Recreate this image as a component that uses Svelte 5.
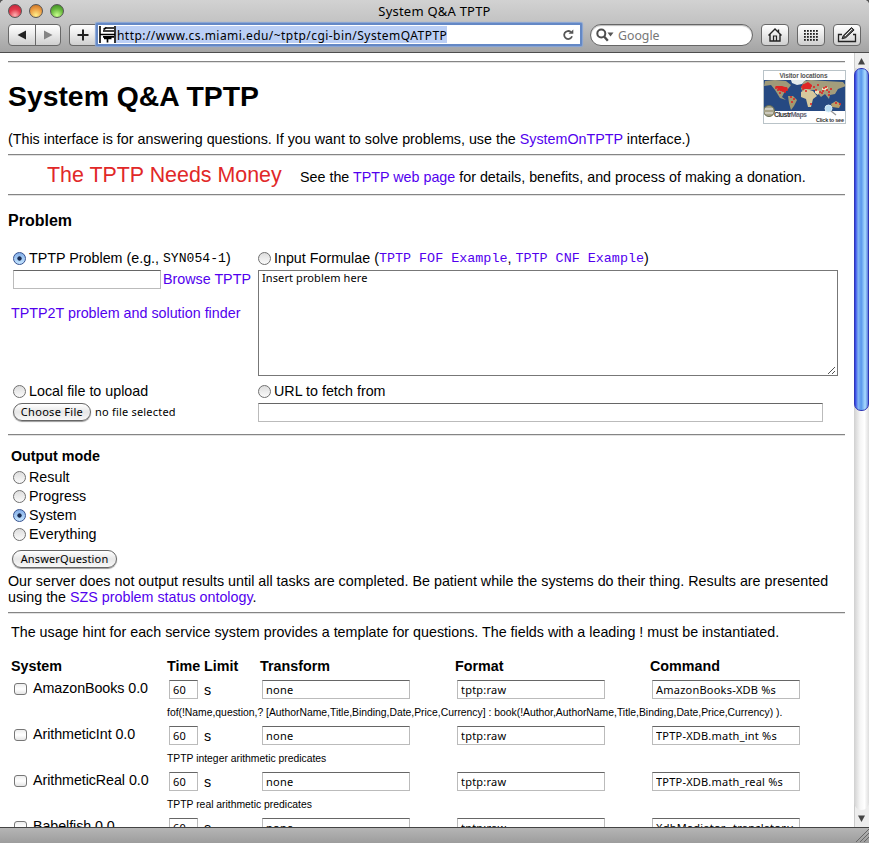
<script>
  const modes = ['Result', 'Progress', 'System', 'Everything'];
  let mode = $state('System');
  let source = $state('tptp');
  const systems = [
    { name: 'AmazonBooks 0.0', command: 'AmazonBooks-XDB %s', hint: 'fof(!Name,question,? [AuthorName,Title,Binding,Date,Price,Currency] : book(!Author,AuthorName,Title,Binding,Date,Price,Currency) ).' },
    { name: 'ArithmeticInt 0.0', command: 'TPTP-XDB.math_int %s', hint: 'TPTP integer arithmetic predicates' },
    { name: 'ArithmeticReal 0.0', command: 'TPTP-XDB.math_real %s', hint: 'TPTP real arithmetic predicates' },
    { name: 'Babelfish 0.0', command: 'XdbMediator--translator.y', hint: '' }
  ];
  const dots = [0, 1, 2, 3, 4].flatMap((x) => [0, 1, 2, 3].map((y) => [x, y]));
  const visitors = [[13,18],[15,20],[18,19],[20,21],[23,18],[24,20],[22,22],[17,23],[39,17],[41,15],[43,16],[45,17],[42,18],[44,14],[47,18],[40,19],[46,15],[48,16],[51,17],[55,15],[57,22],[59,23],[61,18],[64,20],[66,22],[68,19],[63,17],[53,20],[29,32],[31,29],[28,27],[48,34],[66,25],[73,33],[77,34],[43,21],[60,21]];
</script>

<div class="window">
  <header>
    <div class="titlebar">
      <div class="lights"><i class="red"></i><i class="amber"></i><i class="green"></i></div>
      <div class="title">System Q&amp;A TPTP</div>
    </div>
    <div class="toolbar">
      <div class="tool nav">
        <span><svg width="26" height="20"><path d="M17 5.500v9L8.500 10z" fill="#222" /></svg></span>
        <span class="fwd"><svg width="26" height="20"><path d="M8 5.500v9l8.500-4.500z" fill="#858585" /></svg></span>
      </div>
      <div class="tool plus"><svg width="27" height="20"><path d="M7.500 10h11M13 4.500v11" stroke="#222" stroke-width="2" /></svg></div>
      <div class="address">
        <svg class="favicon" width="17" height="17" viewBox="0 0 17 17">
          <path d="M1 0v17" stroke="#000" stroke-width="1.600" />
          <path d="M16 0v17" stroke="#000" stroke-width="1.600" />
          <path d="M1 8.500h15M4 5h11M7.500 2h7.500M7.500 1.500L4.500 3.500M4 10.800h11M5 12.500h7.500M8.500 12v4.500" fill="none" stroke="#000" stroke-width="1.700" />
        </svg>
        <span class="url">http://www.cs.miami.edu/~tptp/cgi-bin/SystemQATPTP</span>
        <svg class="reload" width="14" height="14" viewBox="0 0 14 14"><path d="M9.800 4A4 4 0 1 0 11 8.200" fill="none" stroke="#555" stroke-width="1.800" /><path d="M7.500 5.800h4.800V1.500z" fill="#555" /></svg>
      </div>
      <div class="search">
        <svg width="20" height="16" viewBox="0 0 20 16"><circle cx="5.300" cy="6.500" r="4" fill="none" stroke="#4d4d4d" stroke-width="2" /><path d="M8.300 9.700l3.500 4" stroke="#4d4d4d" stroke-width="2.300" /><path d="M11.500 5.500h6l-3 4z" fill="#555" /></svg>
        <span>Google</span>
      </div>
      <div class="tool icon"><svg width="26" height="20"><path d="M6.500 10.500L13 4 19.500 10.500M8 9.500V16h10V9.500M16.500 7V4.500" fill="none" stroke="#222" stroke-width="1.400" /><path d="M11.500 16v-5h3v5" fill="none" stroke="#222" stroke-width="1.200" /></svg></div>
      <div class="tool icon"><svg width="26" height="20">{#each dots as [x, y]}<rect x={6 + x * 3} y={5 + y * 3} width="1.800" height="1.800" fill="#222" />{/each}</svg></div>
      <div class="tool icon"><svg width="26" height="20"><path d="M8 9.500H4.500v7h17v-7H19" fill="none" stroke="#222" stroke-width="1.300" /><path d="M8 13.800l1.300-3.300L17.500 2.500l2.600 2.500-8.300 7.700z" fill="#555" stroke="#222" /><path d="M11 11l7-7" stroke="#eee" /></svg></div>
    </div>
  </header>

  <div class="view">
    <main>
      <hr />
      <section class="intro">
        <div>
          <h1>System Q&amp;A TPTP</h1>
          <p>(This interface is for answering questions. If you want to solve problems, use the <a>SystemOnTPTP</a> interface.)</p>
        </div>
        <svg class="map" width="83" height="54" viewBox="0 0 83 54">
          <rect width="83" height="54" fill="#fff" />
          <rect y="10" width="83" height="31" fill="#264982" />
          <path d="M28 10h15l-4 4-5 1-5-2z" fill="#e4ebec" />
          <path d="M2 11l10-1 11 1 5 4-3 4-4 4-2 4 4 3-6-2-5-8-4-5-7 1z" fill="#a09a78" />
          <path d="M25 26l5 0 4 4-3 6-3 4-2-7z" fill="#a29a70" />
          <path d="M38 18l3-7 7-1 14 1 18 1 3 4-8 3-3 5-5 1-1 4-4-5-4 3-6-7-7 0-6 1z" fill="#a39d7c" />
          <path d="M38 22l5-3 7 2 4 5-4 3-2 8-3 0-2-8-5-2z" fill="#d6c99d" />
          <path d="M68 34l5-3 5 3-2 4-7-1z" fill="#b8a06b" />
          <path d="M52 20l5 1-2 4-3-2zM59 18l6-1-1 3-5 0z" fill="#eee1bb" />
          {#each visitors as [x, y]}<circle cx={x} cy={y} r="1" fill="#df1e20" />{/each}
          <path d="M12 16h7l6 2-3 4-5-1zM39 15l6-3 4 3-2 4-7 0z" fill="#df2525" />
          <circle cx="6" cy="41" r="5.500" fill="#a9a58b" stroke="#666d55" /><path d="M2 39h8M2 43h8" stroke="#eee" />
          <circle cx="65.500" cy="38.500" r="3.500" fill="#b9dcf3" stroke="#d9edf8" /><path d="M68 41l5 4" stroke="#999" stroke-width="1.500" />
          <text x="16.500" y="7.600" textLength="48" class="m1">Visitor locations</text>
          <text x="11" y="47" textLength="33" class="m2"><tspan>Clustr</tspan><tspan fill="#667">Maps</tspan></text>
          <text x="53" y="52" textLength="28" class="m3">Click to see</text>
          <rect x=".5" y=".5" width="82" height="53" fill="none" stroke="#b9c3c8" />
        </svg>
      </section>
      <hr />
      <section class="banner"><span class="money">The TPTP Needs Money</span><span>See the <a>TPTP web page</a> for details, benefits, and process of making a donation.</span></section>
      <hr />
      <h3>Problem</h3>
      <section class="problem">
        <div class="left">
          <label><input type="radio" bind:group={source} value="tptp" />TPTP Problem (e.g., <code>SYN054-1</code>)</label>
          <div class="field"><input class="box name" type="text" /><a>Browse TPTP</a></div>
          <a class="finder">TPTP2T problem and solution finder</a>
          <label class="second"><input type="radio" bind:group={source} value="file" />Local file to upload</label>
          <div class="field"><button class="choose">Choose File</button><span class="nofile">no file selected</span></div>
        </div>
        <div class="right">
          <label><input type="radio" bind:group={source} value="input" />Input Formulae (<code><a>TPTP FOF Example</a></code>, <code><a>TPTP CNF Example</a></code>)</label>
          <div class="area"><span>Insert problem here</span><svg width="9" height="9"><path d="M1 8L8 1M5 8L8 5" stroke="#555" /></svg></div>
          <label class="second"><input type="radio" bind:group={source} value="url" />URL to fetch from</label>
          <input class="box long" type="text" />
        </div>
      </section>
      <hr />
      <section class="output">
        <b>Output mode</b>
        {#each modes as m}<label><input type="radio" bind:group={mode} value={m} />{m}</label>{/each}
        <button class="answer">AnswerQuestion</button>
        <p>Our server does not output results until all tasks are completed. Be patient while the systems do their thing. Results are presented<br />using the <a>SZS problem status ontology</a>.</p>
      </section>
      <hr />
      <p class="usage">The usage hint for each service system provides a template for questions. The fields with a leading ! must be instantiated.</p>
      <div class="row head"><b>System</b><b>Time Limit</b><b>Transform</b><b>Format</b><b>Command</b></div>
      {#each systems as s}
        <div class="system">
          <div class="row">
            <label class="sys"><input type="checkbox" /><span>{s.name}</span></label>
            <div class="cell"><input class="box secs" type="text" value="60" /><span class="s">s</span></div>
            <div class="cell"><input class="box" type="text" value="none" /></div>
            <div class="cell"><input class="box" type="text" value="tptp:raw" /></div>
            <div class="cell"><input class="box" type="text" value={s.command} /></div>
          </div>
          <div class="hint">{s.hint}</div>
        </div>
      {/each}
    </main>
    <aside>
      <svg width="15" height="15"><path d="M7.500 5L11 11.500H4z" fill="#444" /></svg>
      <div class="track"><div class="thumb"></div></div>
      <svg width="15" height="17"><path d="M7.500 12L11 5.500H4z" fill="#444" /></svg>
    </aside>
  </div>
  <footer><svg width="14" height="14"><path d="M1 14L14 1M5 14L14 5M9 14L14 9" stroke="#666" /></svg></footer>
</div>

<style>
  :global(body) { background: #555; }
  * { box-sizing: border-box; }
  .window { width: 869px; height: 843px; display: flex; flex-direction: column; overflow: hidden; border-radius: 5px 5px 0 0; background: #fff; font: 14.300px/16px "Liberation Sans", Arial, sans-serif; color: #000; white-space: nowrap; }
  header { height: 53px; flex: none; background: linear-gradient(#d2d2d2, #c2c2c2 45%, #a4a4a4); border-bottom: 1px solid #4d4d4d; font-family: "Noto Sans", sans-serif; }
  .titlebar { height: 24px; padding: 0 8px; display: grid; grid-template-columns: 70px 1fr 70px; }
  .lights { display: flex; gap: 7px; padding-top: 4px; }
  .lights i { width: 14px; height: 14px; border-radius: 50%; border: 1px solid #555; }
  .red { background: radial-gradient(circle at 50% 85%, #ffb2b2, #e33a4b 50%, #bd2338); }
  .amber { background: radial-gradient(circle at 50% 85%, #ffef8b, #ec9d43 55%, #bf671b); }
  .green { background: radial-gradient(circle at 50% 85%, #c9ff8d, #65b73b 55%, #37821e); }
  .title { font-size: 13px; line-height: 22px; text-align: center; letter-spacing: .22px; }
  .toolbar { display: flex; padding: 0 8px; }
  .tool { height: 22px; border: 1px solid #686868; border-radius: 4px; background: linear-gradient(#fff, #eee 40%, #cfcfcf); display: flex; }
  .tool svg { display: block; }
  .nav { width: 53px; }
  .nav span { width: 26px; }
  .nav .fwd { border-left: 1px solid #686868; width: 25px; }
  .plus { width: 27px; margin-left: 8px; border-radius: 4px 0 0 4px; border-right: 0; }
  .address { width: 486px; height: 23px; margin: -1px 0 0; border: 2px solid #6488c5; background: #fff; display: flex; align-items: center; padding: 0 3px 0 1px; box-shadow: 0 0 1px 1px #86a4d6; border-radius: 1px; }
  .url { font-size: 12px; line-height: 17px; background: #bbcff5; padding: 1px 0 0 1px; height: 17px; width: 331px; letter-spacing: .45px; }
  .favicon { flex: none; }
  .reload { margin-left: auto; margin-right: 2px; }
  .search { width: 163px; height: 22px; margin-left: 8px; border: 1px solid #666; border-radius: 11px; background: #fff; display: flex; align-items: center; padding-left: 5px; box-shadow: inset 0 1px 1px #bbb; }
  .search span { font-size: 12.300px; color: #777; margin: 1px 0 0 2px; }
  .icon { width: 28px; margin-left: 8px; }
  .view { height: 774px; flex: none; display: flex; overflow: hidden; }
  main { width: 854px; height: 774px; overflow: hidden; padding: 8px 9px 0 8px; }
  aside { width: 15px; display: flex; flex-direction: column; background: #ededed; border-left: 1px solid #ccc; }
  aside svg { display: block; margin-left: -1px; flex: none; }
  .track { flex: 1; background: linear-gradient(90deg, #d0d0d0, #f5f5f5 40%, #fff 70%, #ddd); border-radius: 0 0 8px 8px; margin-left: -1px; }
  .thumb { height: 343px; border-radius: 7px; border: 1px solid #3037b5; background: linear-gradient(90deg, #2c3be4, #83b5f3 25%, #5a98ec 48%, #a8dcff 78%, #5b7cdc); }
  hr { height: 2px; margin: 0; border: 0; border-top: 1px solid #858585; border-bottom: 1px solid #e2e2e2; }
  a { color: #5200ee; }
  p, h1, h3 { margin: 0; }
  .intro { height: 91px; display: flex; justify-content: space-between; }
  h1 { font-size: 28.350px; line-height: 32px; padding-top: 17px; }
  .intro p { padding-top: 19px; }
  .map { margin: 7px -1px 0 0; flex: none; }
  .map text { font-family: "Liberation Sans", sans-serif; font-weight: bold; }
  .m1 { font-size: 6.500px; fill: #555; }
  .m2 { font-size: 7px; fill: #333; }
  .m3 { font-size: 5.500px; fill: #333; }
  .banner { height: 38px; display: flex; align-items: baseline; padding: 7px 0 0 39px; }
  .money { font-size: 21.400px; line-height: 24px; color: #e12828; width: 253px; }
  h3 { font-size: 16px; line-height: 18px; height: 52px; padding-top: 16px; }
  .problem { height: 186px; display: flex; }
  .left { width: 250px; padding-left: 3px; }
  label { display: flex; align-items: center; height: 20px; white-space: pre; }
  code { font: 13.400px "Liberation Mono", monospace; margin-top: 1px; }
  .left code { font-size: 13.100px; }
  input { margin: 0; }
  input[type='radio'] { appearance: none; width: 13px; height: 13px; border: 1px solid #707070; border-radius: 50%; background: linear-gradient(#ddd, #fafafa); margin: 1px 3px 0 2px; flex: none; }
  input[type='radio']:checked { border-color: #35518f; background: radial-gradient(circle, #182b52 0 1.800px, transparent 2.500px), linear-gradient(#83aee8, #c4e5ff); }
  .box { width: 148px; height: 19px; border: 1px solid #bbb; border-top-color: #666; border-radius: 0; padding: 0 3px 1px; background: #fff; font: 11px "Noto Sans", sans-serif; letter-spacing: .22px; color: #000; outline: none; }
  .field { display: flex; align-items: center; padding-left: 2px; height: 19px; }
  .left > .field:nth-child(2) { margin-top: 2px; }
  .field a { margin-top: -2px; }
  .name { margin-right: 2px; }
  .finder { display: block; margin-top: 16px; height: 16px; }
  .second { margin-top: 60px; }
  .right { display: flex; flex-direction: column; }
  .right label input { margin-left: 0 !important; }
  .area { width: 580px; height: 106px; margin-top: 2px; border: 1px solid #777; padding: 0 3px; font: 11px/14px "Noto Sans", sans-serif; letter-spacing: .1px; display: flex; justify-content: space-between; }
  .area svg { align-self: flex-end; margin-right: -2px; }
  .right .second { margin-top: 5px; }
  .long { width: 565px; margin-top: 2px; }
  button { height: 18px; border: 1px solid #666; border-radius: 9px; background: linear-gradient(#fff, #e7e7e7 50%, #f8f8f8); font: 11px/14px "Noto Sans", sans-serif; letter-spacing: .15px; color: #000; padding: 0; box-shadow: 0 1px 1px #999; }
  .choose { width: 78px; margin-right: 4px; letter-spacing: .3px; }
  .nofile { font: 11px "Noto Sans", sans-serif; letter-spacing: .2px; margin-top: -2px; }
  .left > .field:last-child { margin-top: 1px; height: 20px; }
  .output { height: 176px; padding-top: 12px; }
  .output b { display: block; height: 19px; padding-left: 3px; }
  .output label { height: 19px; padding-left: 3px; }
  .answer { width: 105px; display: block; margin: 7px 0 5px 4px; }
  .usage { height: 44px; padding: 10px 0 0 3px; }
  .row { display: grid; grid-template-columns: 156px 93px 195px 195px 150px; padding-left: 3px; }
  .head { height: 22px; }
  .system { height: 46px; }
  .sys { padding-left: 2px; height: 16px; letter-spacing: -.07px; }
  .sys input { appearance: none; width: 13px; height: 12px; border: 1px solid #777; border-radius: 3px; background: linear-gradient(#eee, #fff, #e5e5e5); margin: 2px 6px 0 1px; }
  .cell { padding: 0 0 0 2px; display: flex; align-items: center; }
  .secs { width: 29px; }
  .s { margin-left: 6px; }
  .hint { font-size: 10.370px; line-height: 14px; padding: 7px 0 0 159px; }
  footer { height: 16px; flex: none; border-top: 1px solid #444; background: linear-gradient(#b5b5b5, #9d9d9d); display: flex; justify-content: flex-end; }
</style>
